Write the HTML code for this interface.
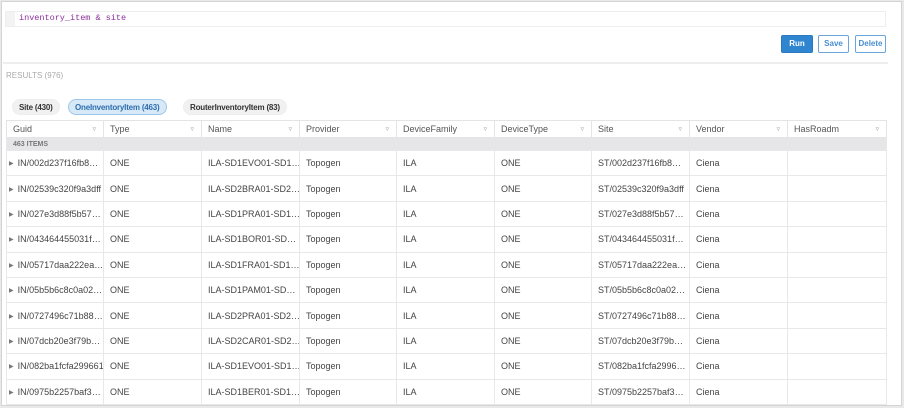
<!DOCTYPE html><html><head><style>
*{box-sizing:border-box;margin:0;padding:0}
body{width:904px;height:408px;background:#e9e9e9;font-family:"Liberation Sans",sans-serif;position:relative;overflow:hidden}
.outer{position:absolute;left:1px;top:1px;width:901px;height:405px;background:#fff;border:1px solid #d4d4d4}
.ed{position:absolute;left:5px;top:11px;width:881px;height:16px;border:1px solid #eee;background:#fff}
.ed .g{position:absolute;left:0;top:0;width:9px;height:14px;background:#f3f3f3}
.ed span{position:absolute;left:13px;top:1px;font-family:"Liberation Mono",monospace;font-size:8.5px;color:#8a2f9c}
.btn{position:absolute;top:35px;height:18px;font-size:8px;font-weight:bold;text-align:center;line-height:16px;border:1px solid #6aa6dc;color:#4a8fd0;background:#fff;border-radius:2px}
.sep{position:absolute;left:3px;top:62px;width:885px;height:2px;background:#eee}
.res{position:absolute;left:6px;top:71px;font-size:8px;color:#aaa}
.pill{position:absolute;top:99px;height:16px;border-radius:8px;font-size:8px;font-weight:bold;line-height:15px;padding:0 6px;background:#f1f1f1;border:1px solid #eee;color:#333;letter-spacing:-0.2px}
table{position:absolute;left:6px;top:120px;width:880px;border-collapse:collapse;font-size:9px;color:#444;table-layout:fixed}
th{height:17px;font-weight:normal;text-align:left;padding-left:6px;color:#555;border:1px solid #e4e4e4;background:#fff;position:relative;font-size:9px}
th i{position:absolute;right:7px;top:4px;font-style:normal;font-size:7px;color:#999}
td{height:25.4px;border:1px solid #e8e8e8;padding-left:6px;white-space:nowrap;overflow:hidden}
td:first-child{padding-left:2px}
tr.gr td{height:13px;background:#e6e6e8;font-size:7px;font-weight:bold;color:#777;padding-left:6px}
.ar{font-size:6px;color:#777;margin-right:4px;vertical-align:1px}
</style></head><body>
<div class="outer"></div>
<div class="ed"><div class="g"></div><span>inventory_item &amp; site</span></div>
<div class="btn" style="left:781px;width:32px;background:#2f85d0;border-color:#2a78c0;color:#fff">Run</div>
<div class="btn" style="left:818px;width:31px">Save</div>
<div class="btn" style="left:855px;width:31px">Delete</div>
<div class="sep"></div>
<div class="res">RESULTS (976)</div>
<div class="pill" style="left:12px">Site (430)</div>
<div class="pill" style="left:68px;background:#d7e8f7;border-color:#9cc6ea;color:#2f6fb0">OneInventoryItem (463)</div>
<div class="pill" style="left:183px">RouterInventoryItem (83)</div>
<table>
<colgroup><col style="width:97px"><col style="width:98px"><col style="width:98px"><col style="width:97px"><col style="width:98px"><col style="width:97px"><col style="width:98px"><col style="width:98px"><col style="width:99px"></colgroup>
<tr><th>Guid<i>&#9663;</i></th><th>Type<i>&#9663;</i></th><th>Name<i>&#9663;</i></th><th>Provider<i>&#9663;</i></th><th>DeviceFamily<i>&#9663;</i></th><th>DeviceType<i>&#9663;</i></th><th>Site<i>&#9663;</i></th><th>Vendor<i>&#9663;</i></th><th>HasRoadm<i>&#9663;</i></th></tr>
<tr class="gr"><td colspan="9">463 ITEMS</td></tr>
<tr><td><span class="ar">&#9654;</span>IN/002d237f16fb8…</td><td>ONE</td><td>ILA-SD1EVO01-SD1…</td><td>Topogen</td><td>ILA</td><td>ONE</td><td>ST/002d237f16fb8…</td><td>Ciena</td><td></td></tr>
<tr><td><span class="ar">&#9654;</span>IN/02539c320f9a3dff</td><td>ONE</td><td>ILA-SD2BRA01-SD2…</td><td>Topogen</td><td>ILA</td><td>ONE</td><td>ST/02539c320f9a3dff</td><td>Ciena</td><td></td></tr>
<tr><td><span class="ar">&#9654;</span>IN/027e3d88f5b57…</td><td>ONE</td><td>ILA-SD1PRA01-SD1…</td><td>Topogen</td><td>ILA</td><td>ONE</td><td>ST/027e3d88f5b57…</td><td>Ciena</td><td></td></tr>
<tr><td><span class="ar">&#9654;</span>IN/043464455031f…</td><td>ONE</td><td>ILA-SD1BOR01-SD…</td><td>Topogen</td><td>ILA</td><td>ONE</td><td>ST/043464455031f…</td><td>Ciena</td><td></td></tr>
<tr><td><span class="ar">&#9654;</span>IN/05717daa222ea…</td><td>ONE</td><td>ILA-SD1FRA01-SD1…</td><td>Topogen</td><td>ILA</td><td>ONE</td><td>ST/05717daa222ea…</td><td>Ciena</td><td></td></tr>
<tr><td><span class="ar">&#9654;</span>IN/05b5b6c8c0a02…</td><td>ONE</td><td>ILA-SD1PAM01-SD…</td><td>Topogen</td><td>ILA</td><td>ONE</td><td>ST/05b5b6c8c0a02…</td><td>Ciena</td><td></td></tr>
<tr><td><span class="ar">&#9654;</span>IN/0727496c71b88…</td><td>ONE</td><td>ILA-SD2PRA01-SD2…</td><td>Topogen</td><td>ILA</td><td>ONE</td><td>ST/0727496c71b88…</td><td>Ciena</td><td></td></tr>
<tr><td><span class="ar">&#9654;</span>IN/07dcb20e3f79b…</td><td>ONE</td><td>ILA-SD2CAR01-SD2…</td><td>Topogen</td><td>ILA</td><td>ONE</td><td>ST/07dcb20e3f79b…</td><td>Ciena</td><td></td></tr>
<tr><td><span class="ar">&#9654;</span>IN/082ba1fcfa299661</td><td>ONE</td><td>ILA-SD1EVO01-SD1…</td><td>Topogen</td><td>ILA</td><td>ONE</td><td>ST/082ba1fcfa2996…</td><td>Ciena</td><td></td></tr>
<tr><td><span class="ar">&#9654;</span>IN/0975b2257baf3…</td><td>ONE</td><td>ILA-SD1BER01-SD1…</td><td>Topogen</td><td>ILA</td><td>ONE</td><td>ST/0975b2257baf3…</td><td>Ciena</td><td></td></tr>
</table>
</body></html>
